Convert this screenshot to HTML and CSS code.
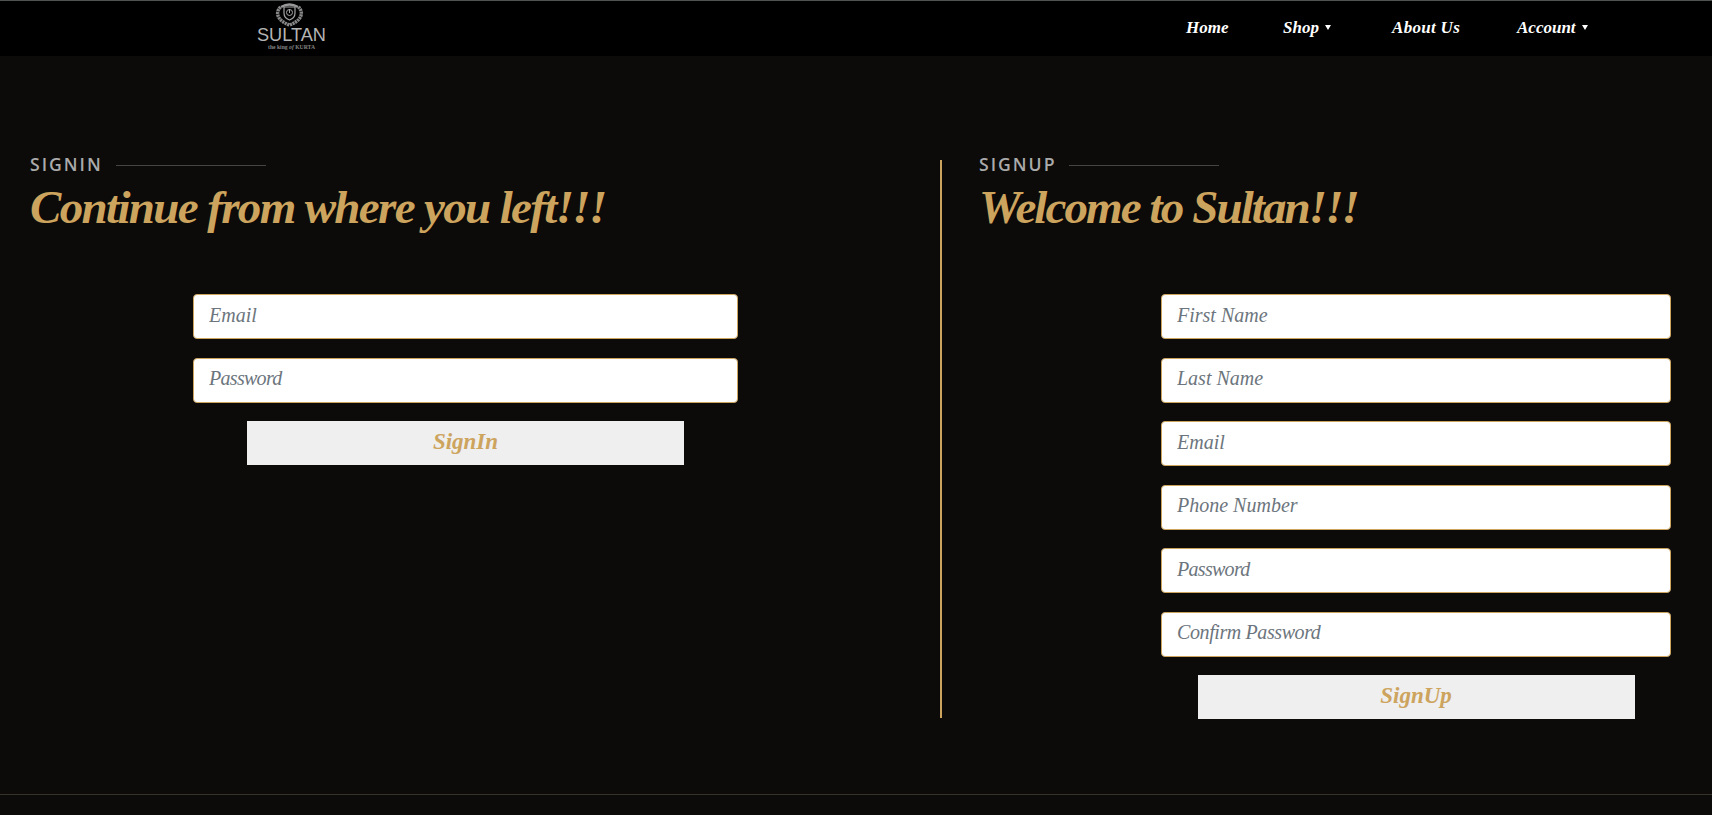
FILE: index.html
```html
<!DOCTYPE html>
<html lang="en">
<head>
<meta charset="utf-8">
<title>Sultan</title>
<link rel="stylesheet" href="styles.css">
</head>
<body>
<header class="navbar">
  <a class="brand" href="#" aria-label="Sultan">
    <svg class="logo" width="70" height="50" viewBox="0 0 70 50">
      <g fill="none" stroke="#a5a5a5">
        <path d="M27 6h11v6q0 5-5.500 7Q27 17 27 12z" stroke-width="1.200"/>
        <circle cx="32.500" cy="11.500" r="3" stroke-width="1"/>
        <path d="M32.500 8v4" stroke-width="1"/>
        <path d="M23.500 6C17.500 12 21 20 32.500 24C44 20 47.500 12 41.500 6" stroke-width="3.400" stroke-dasharray="2.200 .6" stroke="#888"/>
        <path d="M24 6Q32.500 1 41 6" stroke-width="2.400" stroke="#999"/>
      </g>
      <text class="logo-name" x="0" y="40" textLength="69" lengthAdjust="spacingAndGlyphs">SULTAN</text>
      <text class="logo-tag" x="11" y="47.500" textLength="47" lengthAdjust="spacingAndGlyphs">the king <tspan font-style="italic">of</tspan> KURTA</text>
    </svg>
  </a>
  <nav class="menu">
    <a class="home" href="#">Home</a>
    <a class="shop caret" href="#">Shop</a>
    <a class="about" href="#">About Us</a>
    <a class="account caret" href="#">Account</a>
  </nav>
</header>
<main class="auth">
  <section class="signin">
    <h2 class="eyebrow">Signin</h2>
    <p class="title title-in">Continue from where you left!!!</p>
    <form class="form form-in">
      <input type="text" placeholder="Email">
      <input class="tight" type="text" placeholder="Password">
      <button type="button">SignIn</button>
    </form>
  </section>
  <section class="signup">
    <h2 class="eyebrow">Signup</h2>
    <p class="title title-up">Welcome to Sultan!!!</p>
    <form class="form form-up">
      <input type="text" placeholder="First Name">
      <input type="text" placeholder="Last Name">
      <input type="text" placeholder="Email">
      <input type="text" placeholder="Phone Number">
      <input class="tight" type="text" placeholder="Password">
      <input class="snug" type="text" placeholder="Confirm Password">
      <button type="button">SignUp</button>
    </form>
  </section>
</main>
<footer class="footer"></footer>
</body>
</html>
```
FILE: styles.css
```css
* { box-sizing: border-box; }
body {
  margin: 0;
  height: 815px;
  overflow: hidden;
  background: #0c0b09;
  font-family: "Monotype Corsiva", "Z003", "URW Chancery L", "Liberation Serif", serif;
  font-style: italic;
}
.navbar {
  height: 56px;
  padding: 0 121px 0 257px;
  display: flex;
  justify-content: space-between;
  background: #000;
  border-top: 1px solid #4f5250;
}
.brand { display: block; height: 50px; }
.logo { display: block; }
.logo-name { font: 18.500px "Liberation Sans", sans-serif; fill: #b5b5b5; }
.logo-tag { font: bold 6px "Liberation Serif", serif; fill: #858585; }
.menu { display: flex; }
.menu a {
  display: flex;
  align-items: center;
  height: 53px;
  color: #fff;
  font-size: 17px;
  font-weight: 600;
  text-decoration: none;
  white-space: nowrap;
}
.home { width: 97px; }
.shop { width: 109px; }
.about { width: 125px; letter-spacing: 0.3px; }
.account { width: 74px; }
.caret { gap: 6px; }
.caret::after {
  content: "";
  border: 3.5px solid transparent;
  border-top: 5px solid #fff;
  border-bottom: 0;
}
.auth {
  height: 738px;
  padding-top: 104px;
  display: flex;
}
.signin { width: 942px; height: 558px; padding-left: 30px; border-right: 2px solid #cda45e; }
.signup { flex: 1; padding-left: 37px; }
.eyebrow {
  margin: -8px 0 0;
  height: 25px;
  display: flex;
  align-items: flex-start;
  gap: 13px;
  color: #aaa;
  font: 600 17.600px/24px "Open Sans", sans-serif;
  letter-spacing: 2px;
  text-transform: uppercase;
}
.eyebrow::after { content: ""; width: 150px; height: 1px; margin-top: 13px; background: #464542; }
.title {
  margin: 0;
  height: 64px;
  color: #cda45e;
  font-size: 47px;
  font-weight: 700;
  line-height: 61px;
  white-space: nowrap;
}
.title-in { letter-spacing: -1.65px; }
.title-up { letter-spacing: -1.9px; }
.form { margin-top: 53px; display: grid; gap: 18.500px; }
.form-in { width: 545px; margin-left: 163px; }
.form-up { width: 510px; margin-left: 182px; }
.form input {
  height: 45px;
  padding: 0 15px 3px;
  border: 1px solid #cda45e;
  border-radius: 4px;
  background: #fff;
  font: inherit;
  font-size: 20px;
}
.form .tight { letter-spacing: -0.7px; }
.form .snug { letter-spacing: -0.4px; }
.form input::placeholder { color: #6c757d; opacity: 1; }
.form button {
  width: 437px;
  height: 44px;
  padding: 0 0 3px;
  justify-self: center;
  border: 0;
  background: #efefef;
  color: #cda45e;
  font: inherit;
  font-size: 23px;
  font-weight: 700;
}
.footer { height: 21px; border-top: 1px solid #37332a; }
```
